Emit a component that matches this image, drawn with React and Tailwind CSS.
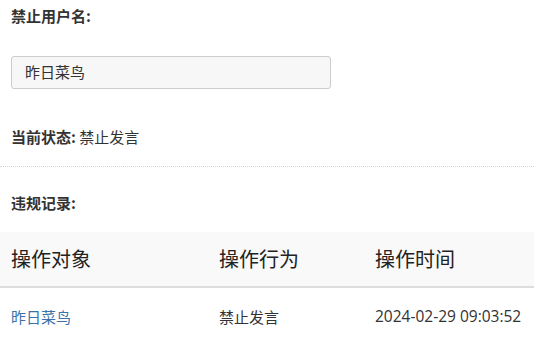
export default function App() {
  const font = { fontFamily: '"Noto Sans CJK SC", "Noto Sans", sans-serif' };

  return (
    <div className="w-[534px] h-[338px] bg-white text-[#333] overflow-hidden" style={font}>
      {/* 禁止用户名 */}
      <div className="px-[11px] pt-[5px] h-[56px]">
        <div className="text-[15px] font-bold leading-[22px]">禁止用户名:</div>
      </div>
      <div className="px-[11px]">
        <div className="w-[320px] h-[33px] flex items-center px-[13px] border border-[#ccc] rounded-[3px] bg-[#f7f7f7] text-[15px]">
          昨日菜鸟
        </div>
      </div>

      {/* 当前状态 */}
      <div className="px-[11px] pt-[37px] h-[77px]">
        <div className="text-[15px] leading-[22px]">
          <span className="font-bold">当前状态:</span> 禁止发言
        </div>
      </div>
      <div className="border-t border-dotted border-[#d8d8d8]"></div>

      {/* 违规记录 */}
      <div className="px-[11px] pt-[25px] h-[65px]">
        <div className="text-[15px] font-bold leading-[22px]">违规记录:</div>
      </div>

      <table className="w-full border-collapse">
        <thead>
          <tr className="bg-[#f9f9f9]">
            <th className="w-[208px] h-[55px] pl-[11px] text-left font-normal text-[20px] text-[#222] border-b-2 border-[#ddd]">操作对象</th>
            <th className="w-[156px] h-[55px] pl-[11px] text-left font-normal text-[20px] text-[#222] border-b-2 border-[#ddd]">操作行为</th>
            <th className="h-[55px] pl-[11px] text-left font-normal text-[20px] text-[#222] border-b-2 border-[#ddd]">操作时间</th>
          </tr>
        </thead>
        <tbody>
          <tr>
            <td className="h-[59px] pl-[11px] text-[15px]">
              <a href="#" className="text-[#3b72a9]">昨日菜鸟</a>
            </td>
            <td className="h-[59px] pl-[11px] text-[15px]">禁止发言</td>
            <td
              className="h-[59px] pl-[11px] text-[15.5px]"
              style={{ fontFamily: '"Open Sans", "Noto Sans CJK SC", sans-serif' }}
            >
              2024-02-29 09:03:52
            </td>
          </tr>
        </tbody>
      </table>
    </div>
  );
}
